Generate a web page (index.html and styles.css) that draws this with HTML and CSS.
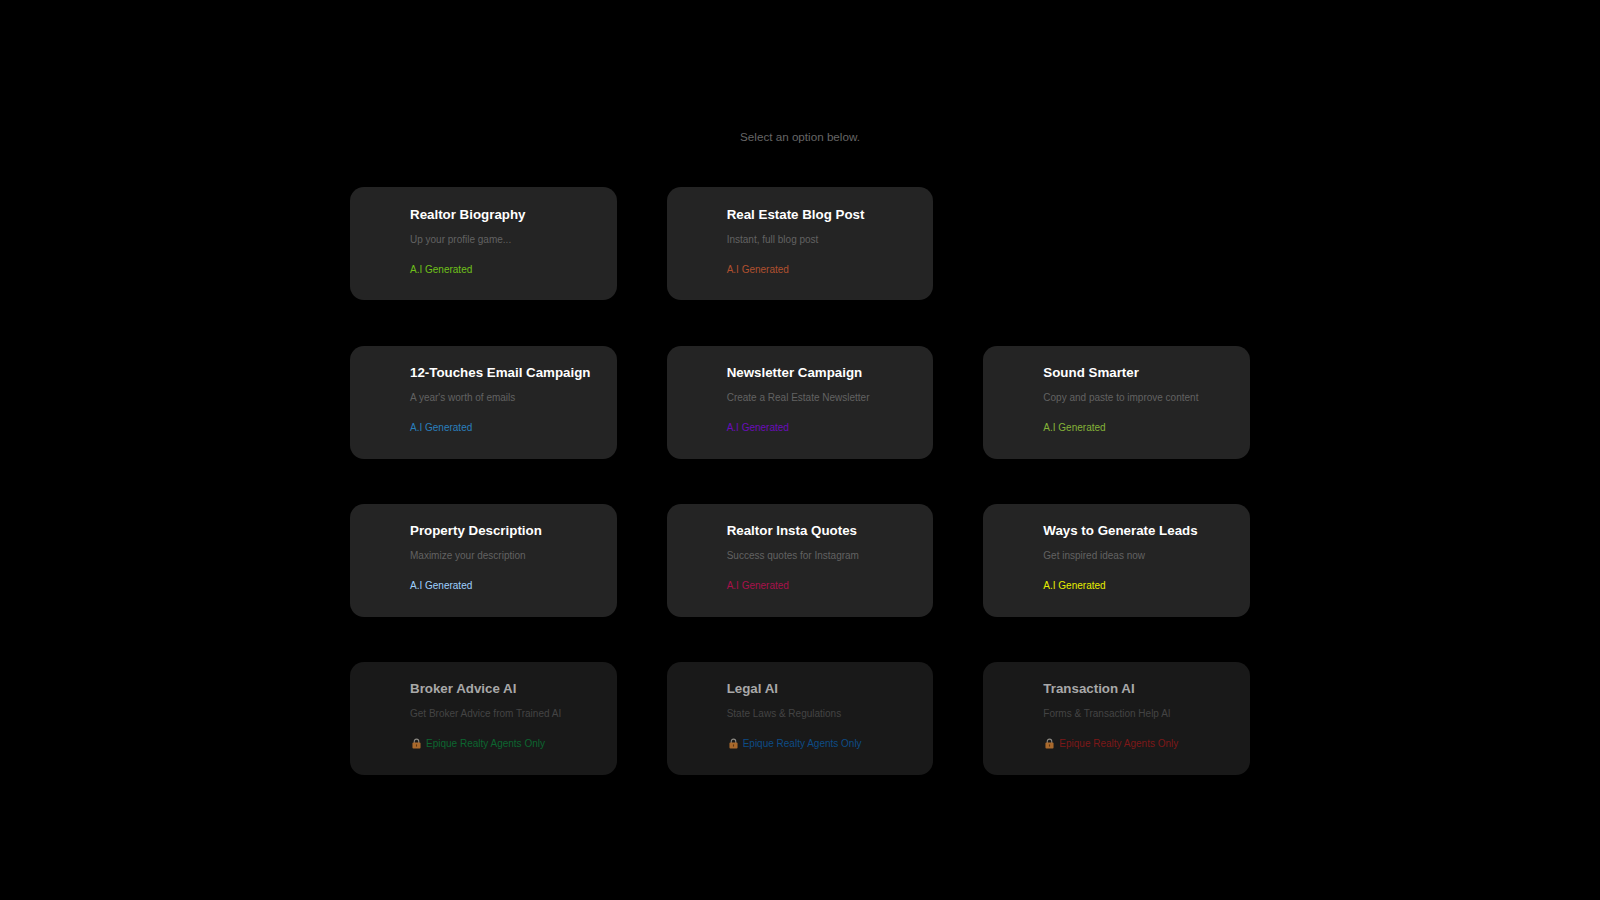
FILE: index.html
```html
<!DOCTYPE html>
<html lang="en">
<head>
<meta charset="utf-8">
<title>Select an option</title>
<link rel="stylesheet" href="styles.css">
</head>
<body>
<main class="page">
  <p class="intro">Select an option below.</p>
  <section class="grid">
    <a class="card"><h2>Realtor Biography</h2><p class="sub">Up your profile game...</p><p class="tag c-lime">A.I Generated</p></a>
    <a class="card"><h2>Real Estate Blog Post</h2><p class="sub">Instant, full blog post</p><p class="tag c-orange">A.I Generated</p></a>
    <div class="empty"></div>
    <a class="card"><h2>12-Touches Email Campaign</h2><p class="sub">A year's worth of emails</p><p class="tag c-blue">A.I Generated</p></a>
    <a class="card"><h2>Newsletter Campaign</h2><p class="sub">Create a Real Estate Newsletter</p><p class="tag c-purple">A.I Generated</p></a>
    <a class="card"><h2>Sound Smarter</h2><p class="sub">Copy and paste to improve content</p><p class="tag c-olive">A.I Generated</p></a>
    <a class="card"><h2>Property Description</h2><p class="sub">Maximize your description</p><p class="tag c-sky">A.I Generated</p></a>
    <a class="card"><h2>Realtor Insta Quotes</h2><p class="sub">Success quotes for Instagram</p><p class="tag c-pink">A.I Generated</p></a>
    <a class="card"><h2>Ways to Generate Leads</h2><p class="sub">Get inspired ideas now</p><p class="tag c-yellow">A.I Generated</p></a>
    <a class="card locked"><h2>Broker Advice AI</h2><p class="sub">Get Broker Advice from Trained AI</p><p class="tag c-green"><svg class="lock" viewBox="0 0 10 12"><path d="M2.5 5.5V3.6a2.5 2.5 0 0 1 5 0v1.9" fill="none" stroke="#8d8a84" stroke-width="1.2"/><rect x="0.5" y="5" width="9" height="6.5" rx="1" fill="#a9692c"/><rect x="4.4" y="7" width="1.2" height="2.4" fill="#5c3512"/></svg>Epique Realty Agents Only</p></a>
    <a class="card locked"><h2>Legal AI</h2><p class="sub">State Laws &amp; Regulations</p><p class="tag c-navy"><svg class="lock" viewBox="0 0 10 12"><path d="M2.5 5.5V3.6a2.5 2.5 0 0 1 5 0v1.9" fill="none" stroke="#8d8a84" stroke-width="1.2"/><rect x="0.5" y="5" width="9" height="6.5" rx="1" fill="#a9692c"/><rect x="4.4" y="7" width="1.2" height="2.4" fill="#5c3512"/></svg>Epique Realty Agents Only</p></a>
    <a class="card locked"><h2>Transaction AI</h2><p class="sub">Forms &amp; Transaction Help AI</p><p class="tag c-red"><svg class="lock" viewBox="0 0 10 12"><path d="M2.5 5.5V3.6a2.5 2.5 0 0 1 5 0v1.9" fill="none" stroke="#8d8a84" stroke-width="1.2"/><rect x="0.5" y="5" width="9" height="6.5" rx="1" fill="#a9692c"/><rect x="4.4" y="7" width="1.2" height="2.4" fill="#5c3512"/></svg>Epique Realty Agents Only</p></a>
  </section>
</main>
</body>
</html>
```
FILE: styles.css
```css
html, body { margin: 0; padding: 0; background: #000; }
body { font-family: "Liberation Sans", Arial, sans-serif; height: 900px; overflow: hidden; }
.page { display: flex; flex-direction: column; align-items: center; padding-top: 130px; }
.intro { margin: 0 0 43.45px; font-size: 11.67px; line-height: 14px; color: #666; }
.grid { width: 900px; display: grid; grid-template-columns: repeat(3, 1fr); grid-auto-rows: 113px; column-gap: 50px; row-gap: 45.1px; }
.card { display: block; box-sizing: border-box; padding: 18.6px 10px 0 60px; background: #242424; border-radius: 14px; }
.card h2 { margin: 0; font-size: 13.33px; line-height: 17px; font-weight: 700; color: #fff; }
.sub { margin: 10.6px 0 0; font-size: 10px; line-height: 12px; color: #626262; }
.tag { margin: 18px 0 0; font-size: 10px; line-height: 12px; display: flex; align-items: center; }
.locked { background: #191919; }
.locked h2 { color: #a8a8a8; }
.locked .sub { color: #444; }
.lock { width: 9px; height: 11px; margin: 0 5px 0 2px; }
.c-lime { color: #6fc01a; }
.c-orange { color: #b0502f; }
.c-blue { color: #2a7fbd; }
.c-purple { color: #6a0dbb; }
.c-olive { color: #84b338; }
.c-sky { color: #9fd0ff; }
.c-pink { color: #a8114b; }
.c-yellow { color: #e6ee00; }
.c-green { color: #0c6630; }
.c-navy { color: #0d4c86; }
.c-red { color: #7d1818; }
```
